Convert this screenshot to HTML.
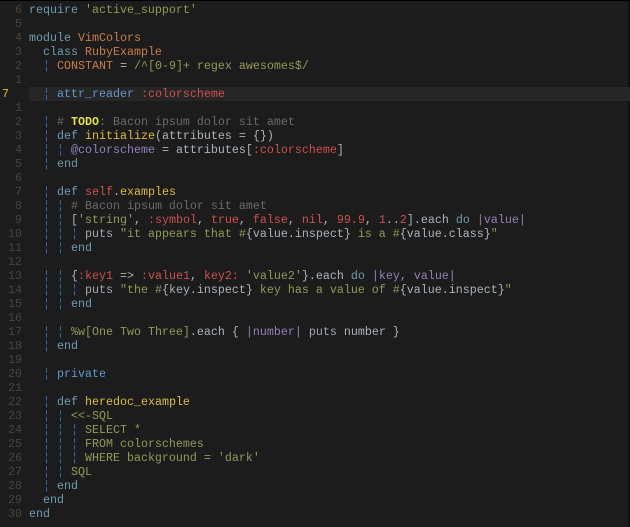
<!DOCTYPE html>
<html><head><meta charset="utf-8"><style>
html,body{margin:0;padding:0;background:#1c1c1c;}
body{width:630px;height:526px;overflow:hidden;border-top:1px solid #000;box-sizing:border-box;position:relative;}
.r{position:absolute;right:0;top:0;width:2px;height:526px;background:#111;}
.c{padding-top:2px;font-family:"Liberation Mono",monospace;font-size:11.67px;color:#aab4bc;}
.l{height:14px;line-height:14px;white-space:pre;position:relative;}
.n{display:inline-block;width:22px;text-align:right;color:#444;margin-right:7px;}
.cur{background:#262626;margin-left:29px;}
.cur .n{position:absolute;left:-27px;text-align:left;color:#d8b840;width:10px;}
.k{color:#6e9cb0}.t{color:#c87c4c}.s{color:#959858}.y{color:#cc5050}
.cm{color:#6a6a6a}.td{color:#e0e058;font-weight:bold}.f{color:#dcbc48}
.b{color:#6496cc}.g{color:#3868aa}.v{color:#9280b8}.p{color:#a0a8b0}
</style></head><body><div class="r"></div><div class="c">
<div class="l"><span class="n">6</span><span class="k">require</span> <span class="s">'active_support'</span></div>
<div class="l"><span class="n">5</span></div>
<div class="l"><span class="n">4</span><span class="k">module</span> <span class="t">VimColors</span></div>
<div class="l"><span class="n">3</span>  <span class="k">class</span> <span class="t">RubyExample</span></div>
<div class="l"><span class="n">2</span>  <span class="g">¦</span> <span class="t">CONSTANT</span> = <span class="s">/^[0-9]+ regex awesomes$/</span></div>
<div class="l"><span class="n">1</span></div>
<div class="l cur"><span class="n">7</span>  <span class="g">¦</span> <span class="b">attr_reader</span> <span class="y">:colorscheme</span></div>
<div class="l"><span class="n">1</span></div>
<div class="l"><span class="n">2</span>  <span class="g">¦</span> <span class="cm"># </span><span class="td">TODO</span><span class="cm">: Bacon ipsum dolor sit amet</span></div>
<div class="l"><span class="n">3</span>  <span class="g">¦</span> <span class="k">def</span> <span class="f">initialize</span>(attributes = {})</div>
<div class="l"><span class="n">4</span>  <span class="g">¦ ¦</span> <span class="v">@colorscheme</span> = attributes[<span class="y">:colorscheme</span>]</div>
<div class="l"><span class="n">5</span>  <span class="g">¦</span> <span class="k">end</span></div>
<div class="l"><span class="n">6</span></div>
<div class="l"><span class="n">7</span>  <span class="g">¦</span> <span class="k">def</span> <span class="y">self</span>.<span class="f">examples</span></div>
<div class="l"><span class="n">8</span>  <span class="g">¦ ¦</span> <span class="cm"># Bacon ipsum dolor sit amet</span></div>
<div class="l"><span class="n">9</span>  <span class="g">¦ ¦</span> [<span class="s">'string'</span>, <span class="y">:symbol</span>, <span class="y">true</span>, <span class="y">false</span>, <span class="y">nil</span>, <span class="y">99.9</span>, <span class="y">1</span>..<span class="y">2</span>].each <span class="k">do</span> <span class="v">|value|</span></div>
<div class="l"><span class="n">10</span>  <span class="g">¦ ¦ ¦</span> <span class="p">puts</span> <span class="s">"it appears that #</span>{value.inspect}<span class="s"> is a #</span>{value.class}<span class="s">"</span></div>
<div class="l"><span class="n">11</span>  <span class="g">¦ ¦</span> <span class="k">end</span></div>
<div class="l"><span class="n">12</span></div>
<div class="l"><span class="n">13</span>  <span class="g">¦ ¦</span> {<span class="y">:key1</span> =&gt; <span class="y">:value1</span>, <span class="y">key2:</span> <span class="s">'value2'</span>}.each <span class="k">do</span> <span class="v">|key, value|</span></div>
<div class="l"><span class="n">14</span>  <span class="g">¦ ¦ ¦</span> <span class="p">puts</span> <span class="s">"the #</span>{key.inspect}<span class="s"> key has a value of #</span>{value.inspect}<span class="s">"</span></div>
<div class="l"><span class="n">15</span>  <span class="g">¦ ¦</span> <span class="k">end</span></div>
<div class="l"><span class="n">16</span></div>
<div class="l"><span class="n">17</span>  <span class="g">¦ ¦</span> <span class="s">%w[One Two Three]</span>.each { <span class="v">|number|</span> <span class="p">puts</span> number }</div>
<div class="l"><span class="n">18</span>  <span class="g">¦</span> <span class="k">end</span></div>
<div class="l"><span class="n">19</span></div>
<div class="l"><span class="n">20</span>  <span class="g">¦</span> <span class="b">private</span></div>
<div class="l"><span class="n">21</span></div>
<div class="l"><span class="n">22</span>  <span class="g">¦</span> <span class="k">def</span> <span class="f">heredoc_example</span></div>
<div class="l"><span class="n">23</span>  <span class="g">¦ ¦</span> <span class="s">&lt;&lt;-SQL</span></div>
<div class="l"><span class="n">24</span>  <span class="g">¦ ¦ ¦</span> <span class="s">SELECT *</span></div>
<div class="l"><span class="n">25</span>  <span class="g">¦ ¦ ¦</span> <span class="s">FROM colorschemes</span></div>
<div class="l"><span class="n">26</span>  <span class="g">¦ ¦ ¦</span> <span class="s">WHERE background = 'dark'</span></div>
<div class="l"><span class="n">27</span>  <span class="g">¦ ¦</span> <span class="s">SQL</span></div>
<div class="l"><span class="n">28</span>  <span class="g">¦</span> <span class="k">end</span></div>
<div class="l"><span class="n">29</span>  <span class="k">end</span></div>
<div class="l"><span class="n">30</span><span class="k">end</span></div>
</div></body></html>
